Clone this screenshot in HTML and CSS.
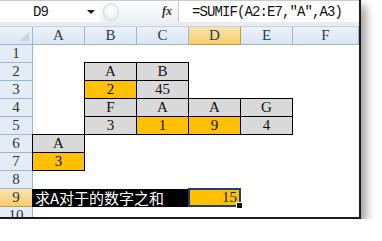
FILE: index.html
```html
<!DOCTYPE html>
<html>
<head>
  <title>SUMIF</title>
  <link rel="stylesheet" href="styles.css">
</head>
<body>
  <div class="window">
    <div class="formula-bar">
      <div class="namebox">
        <span class="name">D9</span>
        <span class="arrow"></span>
      </div>
      <div class="fx-area">
        <span class="round-btn"></span>
        <span class="fx">fx</span>
      </div>
      <div class="formula">=SUMIF(A2:E7,″A″,A3)</div>
    </div>
    <div class="bar-gap"></div>

    <div class="sheet">
      <div class="corner"><span class="tri"></span></div>
      <div class="col-head">A</div>
      <div class="col-head">B</div>
      <div class="col-head">C</div>
      <div class="col-head active">D</div>
      <div class="col-head">E</div>
      <div class="col-head">F</div>

      <div class="row-head">1</div>
      <div class="blank wide"></div>

      <div class="row-head">2</div>
      <div class="blank"></div>
      <div class="cell gray">A</div>
      <div class="cell gray">B</div>
      <div class="blank rest"></div>

      <div class="row-head">3</div>
      <div class="blank"></div>
      <div class="cell gold">2</div>
      <div class="cell gray">45</div>
      <div class="blank rest"></div>

      <div class="row-head">4</div>
      <div class="blank"></div>
      <div class="cell gray">F</div>
      <div class="cell gray">A</div>
      <div class="cell gray">A</div>
      <div class="cell gray">G</div>
      <div class="blank"></div>

      <div class="row-head">5</div>
      <div class="blank"></div>
      <div class="cell gray">3</div>
      <div class="cell gold">1</div>
      <div class="cell gold">9</div>
      <div class="cell gray">4</div>
      <div class="blank"></div>

      <div class="row-head">6</div>
      <div class="cell gray">A</div>
      <div class="blank wide-b"></div>

      <div class="row-head">7</div>
      <div class="cell gold">3</div>
      <div class="blank wide-b"></div>

      <div class="row-head">8</div>
      <div class="blank wide"></div>

      <div class="row-head active">9</div>
      <div class="label">求A对于的数字之和</div>
      <div class="selected">15<span class="handle"></span></div>
      <div class="blank"></div>
      <div class="blank"></div>

      <div class="row-head">10</div>
      <div class="blank wide"></div>
    </div>
  </div>
</body>
</html>
```

FILE: styles.css
```css
body {
  margin: 0;
  background: #fff;
  font-family: "Liberation Serif", serif;
}
.window {
  width: 359px;
  height: 217px;
  border-right: 2px solid #1c1c1c;
  border-bottom: 2px solid #1c1c1c;
  box-shadow: 5px 6px 9px rgba(0, 0, 0, 0.38);
  background: #fff;
  overflow: hidden;
}

/* formula bar */
.formula-bar {
  display: flex;
  height: 21px;
  border-top: 1px solid #c6ccd4;
}
.namebox {
  width: 100px;
  display: flex;
  align-items: center;
  background: #fff;
}
.name {
  padding-left: 33px;
  font-family: "Liberation Mono", monospace;
  font-size: 14px;
  letter-spacing: -0.8px;
  color: #111;
}
.arrow {
  margin-left: auto;
  margin-right: 5px;
  width: 0;
  height: 0;
  border-left: 4px solid transparent;
  border-right: 4px solid transparent;
  border-top: 4px solid #222;
}
.fx-area {
  width: 78px;
  display: flex;
  align-items: center;
  background: linear-gradient(#fbfcfd, #eef1f5);
}
.round-btn {
  width: 14px;
  height: 16px;
  margin-left: 3px;
  border-radius: 50%;
  border: 1px solid #d2d7de;
  background: radial-gradient(circle at 50% 40%, #fff, #e3e7ec);
}
.fx {
  margin-left: auto;
  margin-right: 6px;
  font-style: italic;
  font-weight: bold;
  font-size: 12px;
  color: #333;
}
.formula {
  flex: 1;
  display: flex;
  align-items: center;
  padding-left: 13px;
  background: #fff;
  border-left: 1px solid #c4cad2;
  font-family: "Liberation Mono", monospace;
  font-size: 14px;
  letter-spacing: -0.9px;
  color: #111;
  white-space: nowrap;
}
.bar-gap {
  height: 4px;
  background: #e9edf2;
  border-bottom: 1px solid #c5d1de;
}

/* sheet */
.sheet {
  display: grid;
  grid-template-columns: 33px repeat(5, 52px) 1fr;
  grid-auto-rows: 18px;
  font-size: 15px;
  color: #111;
}
.corner,
.col-head,
.row-head {
  background: linear-gradient(#eaf1fa, #dce6f3);
  border-right: 1px solid #9eb6ce;
  border-bottom: 1px solid #9eb6ce;
  display: flex;
  align-items: center;
  justify-content: center;
  color: #2b3a4c;
}
.corner {
  position: relative;
}
.tri {
  position: absolute;
  right: 3px;
  bottom: 3px;
  width: 0;
  height: 0;
  border-left: 9px solid transparent;
  border-bottom: 9px solid #c7d2df;
}
.row-head {
  background: #e4ecf7;
  color: #333;
}
.col-head.active,
.row-head.active {
  background: linear-gradient(#fbe4ad, #f7cd6c);
  border-color: #c29b4a;
}
.blank.wide {
  grid-column: 2 / 8;
}
.blank.wide-b {
  grid-column: 3 / 8;
}
.blank.rest {
  grid-column: 5 / 8;
}
.cell {
  margin: -1px 0 0 -1px;
  border: 1px solid #000;
  display: flex;
  align-items: center;
  justify-content: center;
}
.gray {
  background: #d9d9d9;
}
.gold {
  background: #ffc000;
}
.label {
  grid-column: 2 / 5;
  margin-left: -1px;
  background: #000;
  color: #fff;
  font-family: "Noto Sans CJK SC", sans-serif;
  font-size: 15px;
  line-height: 18px;
  padding-left: 3px;
  white-space: nowrap;
}
.selected {
  position: relative;
  margin: -1px 0 0 -1px;
  border: 2px solid #213d77;
  background: #ffc000;
  display: flex;
  align-items: center;
  justify-content: flex-end;
  padding-right: 2px;
  color: #222;
}
.handle {
  position: absolute;
  right: -4px;
  bottom: -4px;
  width: 5px;
  height: 5px;
  background: #111;
  border: 1px solid #fff;
}
```
